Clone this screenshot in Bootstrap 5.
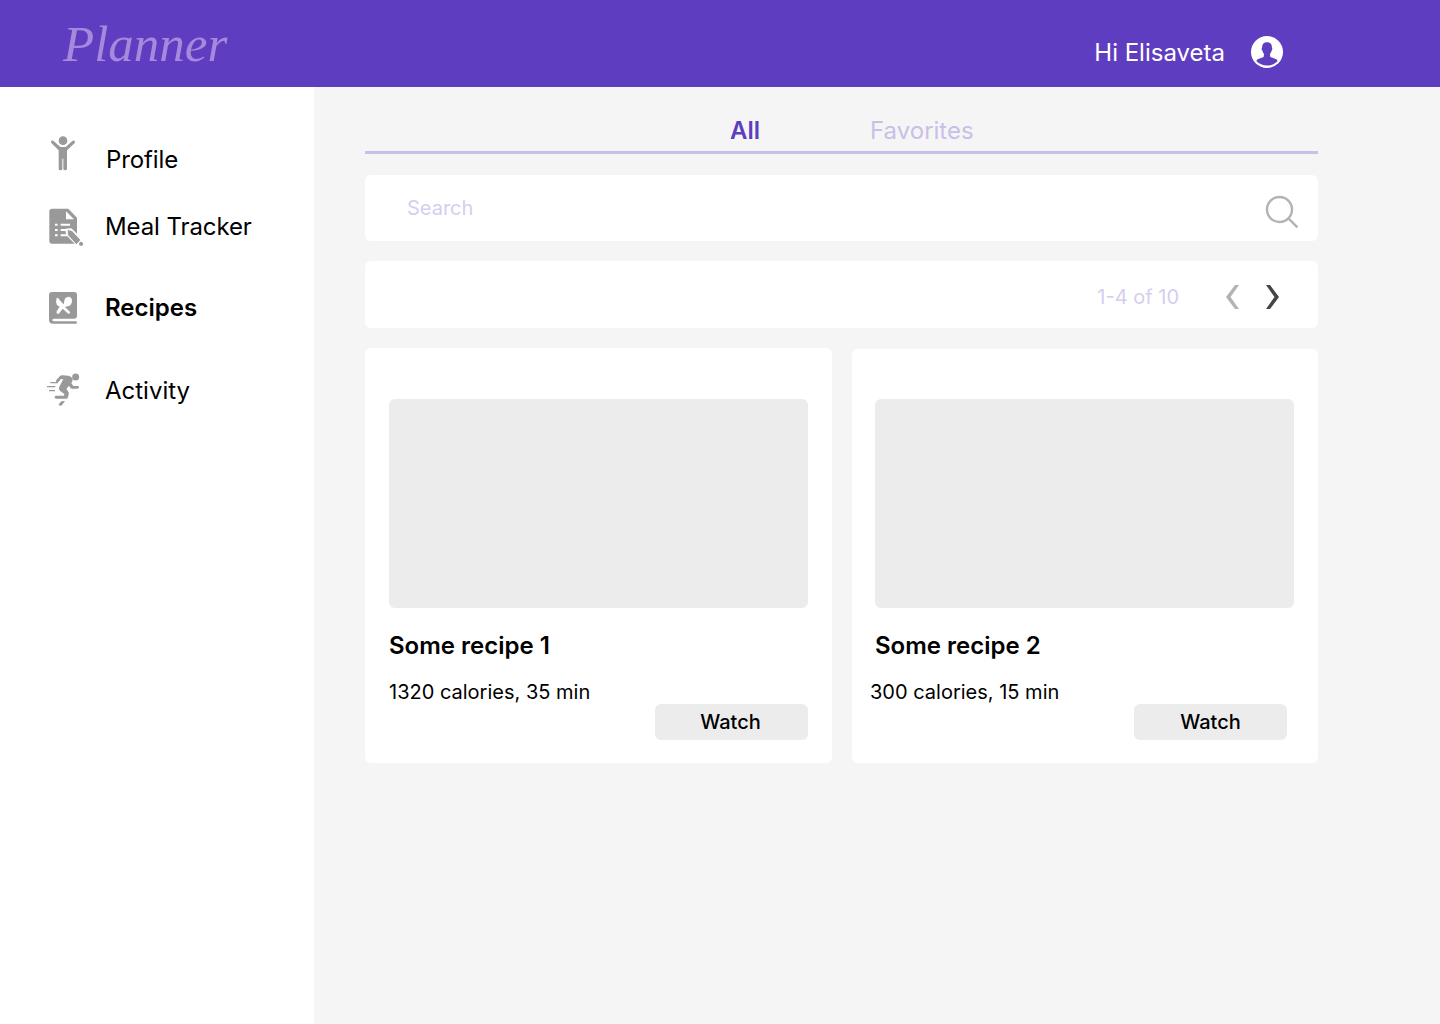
<!DOCTYPE html>
<html lang="en">
<head>
<meta charset="utf-8">
<meta name="viewport" content="width=device-width, initial-scale=1">
<title>Planner – Recipes</title>
<link href="https://cdn.jsdelivr.net/npm/bootstrap@5.3.0/dist/css/bootstrap.min.css" rel="stylesheet">
<style>
body{font-family:Inter,"Liberation Sans",sans-serif;font-size:24px;line-height:30px;color:#000;background:#f5f5f5;overflow:hidden}
a{color:inherit;text-decoration:none}
.topbar{height:87px;background:#5f3dc0;padding:0 157px 0 63px}
.brand{font:italic 51px/60px "Liberation Serif",serif;color:#a489dc}
.user{font-weight:400;color:#fff;gap:26px;padding-top:17px}
.user span{padding-top:2px}
.shell{height:937px}
.side{width:314px;background:#fff;padding:43px 0 0 35px}
.side a{height:60px;gap:10px}
.side svg{width:60px;height:60px;flex:none;color:#999}
.side span{letter-spacing:-.1px}
.side .first{gap:11px}
.side .gap-top-sm{margin-top:7px}
.side .current{margin-top:21px;font-weight:600}
.side .current span{letter-spacing:0}
.side .gap-top-lg{margin-top:22px}
.side .gap-top-lg span{padding-top:2px;letter-spacing:0}
.content{width:953px;margin-left:51px}
.tabs{height:67px;border-bottom:3px solid #c9bfe8;padding:29px 0 0 365px;gap:110px;color:#c9bfe8;font-weight:400}
.tabs .on{color:#5f3dc0;font-weight:600}
.panel{background:#fff;border-radius:6px}
.soft{color:#d6cdf0;font-size:20px;font-weight:400}
.search{height:66px;margin-top:21px;padding:0 19px 0 42px}
.pager{height:67px;margin-top:20px;padding:4px 38px 0 0}
.pager .soft{margin-right:46px}
.pager .next{margin-left:25px}
.recipes{gap:20px;margin-top:20px}
.recipe{flex:0 0 467px;height:415px;padding:51px 24px 0}
.recipe.two{flex-basis:466px;height:414px;margin-top:1px;padding:50px 24px 0 23px}
.photo{height:209px;border-radius:6px;background:#ececec}
.recipe h2{font-size:24px;line-height:30px;font-weight:600;margin:23px 0 0}
.recipe p{font-size:20px;line-height:24px;margin:19px 0 0}
.two p{margin-left:-5px}
.watch{width:153px;height:36px;border:0;border-radius:6px;background:#ececec;font-size:20px;line-height:36px;font-weight:500;padding:0 2px 0 0;color:#000}
.two .watch{margin-right:7px;padding:0}
</style>
</head>
<body>
<header class="topbar d-flex justify-content-between align-items-center">
  <a href="#" class="brand">Planner</a>
  <div class="user d-flex align-items-center"><span>Hi Elisaveta</span>
    <svg width="32" height="32" viewBox="0 0 32 32"><circle cx="16" cy="16" r="16" fill="#fff"/><path fill="#5f3dc0" d="M16 6.300c3.300 0 5 2.100 4.900 5.200 0 .5.500.7.400 1.700-.1.900-.6 1-.8 1.700-.4 1.500-1 2.200-1.400 2.800-.1 2.500.1 3.300 1.500 3.900 2.500 1 5.900 1.500 5.900 3.600C24 27.800 20 29.500 16 29.500s-8-1.700-10.500-4.300c0-2.100 3.400-2.600 5.900-3.600 1.400-.6 1.600-1.400 1.500-3.900-.4-.6-1-1.300-1.400-2.800-.2-.7-.7-.8-.8-1.700-.1-1 .4-1.200.4-1.700-.1-3.100 1.600-5.200 4.900-5.200z"/></svg>
  </div>
</header>
<div class="shell d-flex">
  <nav class="side d-flex flex-column">
    <a href="#" class="first d-flex align-items-center">
      <svg viewBox="0 15 180 180" fill="currentColor"><circle cx="84" cy="47" r="13"/><path d="M48 51q1-7 8-3l20 18h16l20-18q7-4 8 3l-1 3-23 22v57q-1 3-6 3-5 0-5-4v-31h-3v31q0 4-6 4-5 0-5-4V76L49 54z"/></svg>
      <span>Profile</span></a>
    <a href="#" class="gap-top-sm d-flex align-items-center">
      <svg viewBox="0 6 180 180"><path fill="currentColor" d="M51 41h49l26 27v78H51q-8 0-8-8V49q0-8 8-8z"/><path fill="#fff" d="M93 49v24h24z"/><path stroke="#fff" stroke-width="6" d="M60 89h8m9 0h28M60 105h8m9 0h19M60 121h8m9 0h18"/><path fill="#fff" d="M90 101l19-1 19 18v31h-6l-28-28z"/><path fill="currentColor" d="M98 105l13 3 25 27-12 13-25-28zM133 143q4-6 10 0 4 5-1 9-6 2-10-3z"/></svg>
      <span>Meal Tracker</span></a>
    <a href="#" class="current d-flex align-items-center">
      <svg viewBox="0 -6 180 180"><path fill="currentColor" d="M51 36h66q9 0 9 9v62q0 9-9 9H58q-6 0-6 4 0 4 6 4h67v7H54q-12 0-12-12V45q0-9 9-9z"/><path fill="#fff" d="M65 54q-4 12 1 21 4 5 9 4l-10 15q-2 6 3 8 4 0 6-4l9-12 15 14q5 3 7-1 1-4-3-6L90 81q4-1 10-2 11-5 11-17 0-10-10-12-12 1-13 12-1 9-3 11L69 54q-2-2-4 0z"/></svg>
      <span>Recipes</span></a>
    <a href="#" class="gap-top-lg d-flex align-items-center">
      <svg viewBox="0 0 180 180"><circle cx="122" cy="51" r="10.500" fill="currentColor"/><path fill="none" stroke="currentColor" stroke-width="4" d="M46 68h23M36 80h25M42 92h18"/><path fill="currentColor" d="M64 60l11-12q3-3 9-2 18 0 27 7 4 5 1 11l-3 6 6 8h12q5 0 5 4 0 4-5 4h-16q-3 0-5-3l-4-6-8 10 5 7q4 5 2 10l-3 10q-2 3-6 2H63q-4 0-4-4 0-5 4-5h24l1-5-13-10q-6-5-2-12l12-22-7-1-8 9q-3 2-6 0-2-3 0-6zM77 126q2-4 13-3l-9 12q-4 4-9 1-2-2 0-4z"/></svg>
      <span>Activity</span></a>
  </nav>
  <main class="content">
    <div class="tabs d-flex"><a href="#" class="on">All</a><a href="#">Favorites</a></div>
    <div class="panel search d-flex align-items-center justify-content-between">
      <span class="soft">Search</span>
      <svg class="mt-2" width="34" height="34" viewBox="0 0 34 34" fill="none" stroke="#b3b3b3" stroke-width="2.400"><circle cx="14.500" cy="14.500" r="12.500"/><path d="M23.400 23.400l9 9"/></svg>
    </div>
    <div class="panel pager d-flex align-items-center justify-content-end">
      <span class="soft">1-4 of 10</span>
      <svg width="15" height="24" viewBox="0 0 15 24"><path fill="#b3b3b3" d="M10 0h4L5.500 12 14 24h-4L1 12z"/></svg>
      <svg class="next" width="15" height="24" viewBox="0 0 15 24"><path fill="#444" d="M1 0h4l9 12-9 12H1l8.500-12z"/></svg>
    </div>
    <div class="recipes d-flex">
      <article class="panel recipe"><div class="photo"></div><h2>Some recipe 1</h2><p>1320 calories, 35 min</p><div class="d-flex justify-content-end"><button class="watch">Watch</button></div></article>
      <article class="panel recipe two"><div class="photo"></div><h2>Some recipe 2</h2><p>300 calories, 15 min</p><div class="d-flex justify-content-end"><button class="watch">Watch</button></div></article>
    </div>
  </main>
</div>
<script src="https://cdn.jsdelivr.net/npm/bootstrap@5.3.0/dist/js/bootstrap.bundle.min.js"></script>
</body>
</html>
